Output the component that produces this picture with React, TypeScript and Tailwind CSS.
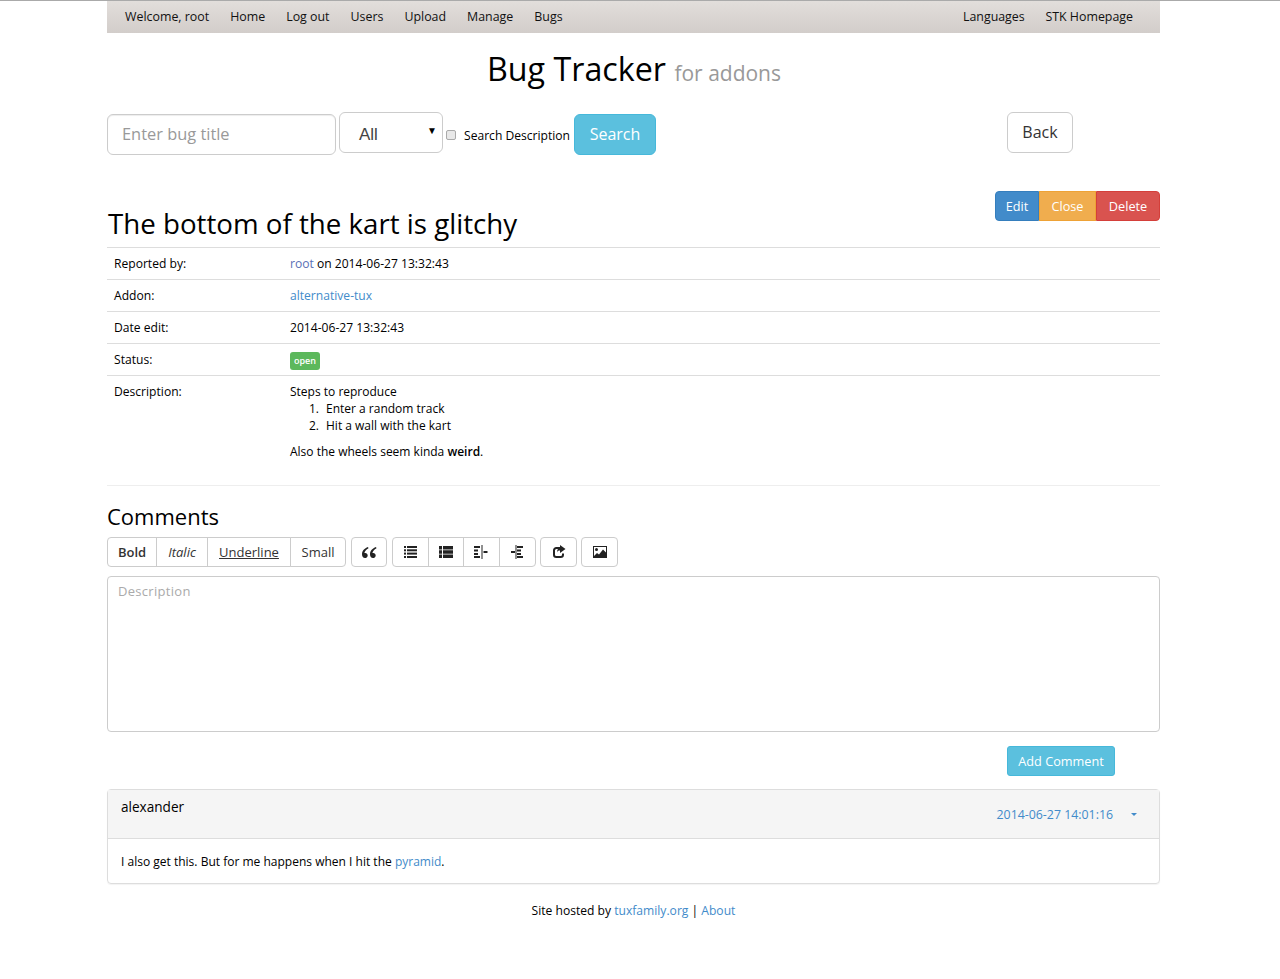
import React from 'react';

const link = 'text-[#428bca]';
const rowCls = 'flex border-t border-[#ddd] pl-[7px] pt-[7px]';

function QuoteIcon() {
	return (
		<svg width="15" height="11" viewBox="0 0 15 11" fill="#222">
			<path d="M6 0C2.500 1.200 0 3.800 0 7.200 0 9.500 1.200 11 3 11c1.500 0 2.700-1.100 2.700-2.600S4.600 6 3.300 6c-.4 0-.7 0-.9.1C2.700 4.200 4.200 2.500 6.500 1.200z" />
			<path d="M14 0c-3.500 1.200-6 3.800-6 7.200C8 9.500 9.200 11 11 11c1.500 0 2.700-1.100 2.700-2.600S12.600 6 11.300 6c-.4 0-.7 0-.9.1.3-1.900 1.800-3.600 4.100-4.900z" />
		</svg>
	);
}

function ListIcon() {
	return (
		<svg width="13" height="12" viewBox="0 0 13 12" fill="#222">
			<rect x="0" y="0" width="2" height="2" />
			<rect x="3" y="0" width="10" height="2" />
			<rect x="0" y="3.300" width="2" height="2" />
			<rect x="3" y="3.300" width="10" height="2" />
			<rect x="0" y="6.600" width="2" height="2" />
			<rect x="3" y="6.600" width="10" height="2" />
			<rect x="0" y="10" width="2" height="2" />
			<rect x="3" y="10" width="10" height="2" />
		</svg>
	);
}

function ThListIcon() {
	return (
		<svg width="14" height="12" viewBox="0 0 14 12" fill="#222">
			<rect x="0" y="0" width="3" height="3.500" />
			<rect x="4" y="0" width="10" height="3.500" />
			<rect x="0" y="4.250" width="3" height="3.500" />
			<rect x="4" y="4.250" width="10" height="3.500" />
			<rect x="0" y="8.500" width="3" height="3.500" />
			<rect x="4" y="8.500" width="10" height="3.500" />
		</svg>
	);
}

function IndentIcon({ right }: { right?: boolean }) {
	return (
		<svg width="15" height="14" viewBox="0 0 15 14" fill="#222">
			<rect x={right ? 7 : 0} y="1" width="6" height="2" />
			<rect x={right ? 7 : 0} y="4.500" width="4" height="2" />
			<rect x={right ? 7 : 0} y="8" width="4" height="2" />
			<rect x={right ? 7 : 0} y="11" width="6" height="2" />
			<rect x={right ? 5.500 : 7.500} y="0" width="1" height="14" />
			<rect x={right ? 1 : 9.500} y="6" width="4" height="2" />
		</svg>
	);
}

function ShareIcon() {
	return (
		<svg width="14" height="14" viewBox="0 0 14 14" fill="none">
			<path d="M11 8.500v1.200A2.300 2.300 0 0 1 8.700 12H4.300A2.300 2.300 0 0 1 2 9.700V5.300A2.300 2.300 0 0 1 4.300 3H8" stroke="#222" strokeWidth="2" />
			<path d="M8 0l5.500 4L8 8V5.500c-1.600 0-2.600.6-3 2 0-2.800 1-4.300 3-4.500z" fill="#222" />
		</svg>
	);
}

function PictureIcon() {
	return (
		<svg width="14" height="12" viewBox="0 0 14 12">
			<rect x="0" y="0" width="14" height="12" fill="#222" />
			<rect x="1" y="1" width="12" height="10" fill="#fff" />
			<circle cx="3.500" cy="3.500" r="1.500" fill="#222" />
			<path d="M1 10l3-3 2 1.500L10 3.500l3 3V11H1z" fill="#222" />
		</svg>
	);
}

function ToolBtn({ children, className }: { children: React.ReactNode; className?: string }) {
	return (
		<button className={`h-[30px] border border-[#ccc] bg-white flex items-center justify-center text-[#333] ${className}`}>
			{children}
		</button>
	);
}

function Row({ label, children }: { label: string; children: React.ReactNode }) {
	return (
		<div className={`${rowCls} h-[32px]`}>
			<div className="w-[176px] shrink-0">{label}</div>
			<div>{children}</div>
		</div>
	);
}

export default function App() {
	return (
		<div className="h-[979px] bg-white border-t border-t-[#aaa] font-['Open_Sans',sans-serif] text-[12.100px] leading-[17px] text-black">
			<div className="ml-[107px] w-[1053px]">
				<div className="h-[32px] pb-[2px] px-[18px] flex justify-between items-center bg-gradient-to-b from-[#e2dedb] to-[#d2cdca] text-[12.400px] text-[#111]">
					<div className="flex gap-[21px]">
						<span>Welcome, root</span>
						<span>Home</span>
						<span>Log out</span>
						<span>Users</span>
						<span>Upload</span>
						<span>Manage</span>
						<span>Bugs</span>
					</div>
					<div className="flex gap-[20.700px] pr-[9px]">
						<span>Languages</span>
						<span>STK Homepage</span>
					</div>
				</div>

				<h1 className="text-center h-[79px] pt-[14px] text-[32.250px] leading-[44px] pl-[1px]">
					Bug Tracker <small className="text-[21px] text-[#999]">for addons</small>
				</h1>

				<div className="flex h-[79px] items-start">
					<input
						placeholder="Enter bug title"
						className="mt-[2px] w-[229px] h-[41px] px-[14px] pb-[3px] border border-[#ccc] rounded-[6px] text-[16.400px] placeholder:text-[#999] shadow-[inset_0_1px_1px_rgba(0,0,0,0.075)]"
					/>
					<div className="relative ml-[3px] w-[104px] h-[41px] border border-[#ccc] rounded-[6px] pl-[19px] pt-[3px] flex items-center text-[17px] font-medium text-[#444] font-['Liberation_Sans',sans-serif]">
						All
						<span className="absolute right-[5px] top-[13px] text-[10px] leading-[10px] text-black">▼</span>
					</div>
					<input type="checkbox" className="appearance-none ml-[3px] mt-[18px] w-[10px] h-[10px] border border-[#aaa] bg-[#e8e8e8] rounded-[2px]" />
					<span className="ml-[8px] mt-[15px] w-[110px] whitespace-nowrap">Search Description</span>
					<button className="mt-[2px] w-[82px] h-[41px] rounded-[6px] border border-[#46b8da] bg-[#5bc0de] text-white text-[16px]">Search</button>
					<button className="ml-[351px] w-[66px] h-[41px] rounded-[6px] border border-[#ccc] bg-white text-[#333] text-[16px]">Back</button>
				</div>

				<div className="flex justify-end h-[30px] text-[12.700px] text-white">
					<button className="w-[44px] rounded-l-[4px] bg-[#428bca] border border-[#357ebd]">Edit</button>
					<button className="w-[57px] bg-[#f0ad4e] border border-[#eea236]">Close</button>
					<button className="w-[64px] rounded-r-[4px] bg-[#d9534f] border border-[#d43f3a]">Delete</button>
				</div>

				<h2 className="h-[26px] text-[27.700px] leading-[36px] pl-[1px] -mt-[16px] mb-[16px] relative">The bottom of the kart is glitchy</h2>

				<div>
					<Row label="Reported by:">
						<span className="text-[#5a6fb5]">root</span> on 2014-06-27 13:32:43
					</Row>
					<Row label="Addon:">
						<span className={link}>alternative-tux</span>
					</Row>
					<Row label="Date edit:">2014-06-27 13:32:43</Row>
					<Row label="Status:">
						<span className="inline-flex items-center justify-center w-[30px] h-[18px] mt-[1px] pb-[1px] rounded-[3px] bg-[#5cb85c] text-white text-[9px] font-semibold">open</span>
					</Row>
					<div className={`${rowCls} h-[110px]`}>
						<div className="w-[176px] shrink-0">Description:</div>
						<div className="text-[12px]">
							<p>Steps to reproduce</p>
							<ol className="pl-[19px]">
								<li className="flex"><span className="w-[17px]">1.</span>Enter a random track</li>
								<li className="flex"><span className="w-[17px]">2.</span>Hit a wall with the kart</li>
							</ol>
							<p className="mt-[9px]">
								Also the wheels seem kinda <b className="font-semibold">weird</b>.
							</p>
						</div>
					</div>
				</div>

				<div className="border-t border-[#eee] pt-[15px]">
					<h3 className="text-[22px] leading-[30px] h-[36px]">Comments</h3>
				</div>

				<div className="flex text-[13px]">
					<ToolBtn className="w-[50px] rounded-l-[4px] font-semibold">Bold</ToolBtn>
					<ToolBtn className="w-[52px] -ml-px italic">Italic</ToolBtn>
					<ToolBtn className="w-[84px] -ml-px underline">Underline</ToolBtn>
					<ToolBtn className="w-[56px] -ml-px rounded-r-[4px]">Small</ToolBtn>
					<ToolBtn className="w-[36px] ml-[5px] rounded-[4px]"><QuoteIcon /></ToolBtn>
					<ToolBtn className="w-[37px] ml-[5px] rounded-l-[4px]"><ListIcon /></ToolBtn>
					<ToolBtn className="w-[36px] -ml-px"><ThListIcon /></ToolBtn>
					<ToolBtn className="w-[37px] -ml-px"><IndentIcon /></ToolBtn>
					<ToolBtn className="w-[37px] -ml-px rounded-r-[4px]"><IndentIcon right /></ToolBtn>
					<ToolBtn className="w-[37px] ml-[4px] rounded-[4px]"><ShareIcon /></ToolBtn>
					<ToolBtn className="w-[37px] ml-[4px] rounded-[4px]"><PictureIcon /></ToolBtn>
				</div>

				<textarea
					placeholder="Description"
					className="block mt-[9px] w-full h-[156px] px-[10px] py-[6px] border border-[#ccc] rounded-[4px] text-[13px] tracking-[0.3px] resize-none placeholder:text-[#aaa]"
				/>

				<div className="mt-[14px] h-[43px] pl-[900px]">
					<button className="w-[108px] h-[30px] rounded-[3px] border border-[#46b8da] bg-[#5bc0de] text-white text-[12.700px]">Add Comment</button>
				</div>

				<div className="border border-[#ddd] rounded-[4px] shadow-[0_1px_1px_rgba(0,0,0,0.05)]">
					<div className="h-[49px] bg-[#f5f5f5] border-b border-[#ddd] flex justify-between px-[13px]">
						<span className="text-[13.600px] leading-[19px] mt-[7px]">alexander</span>
						<span className={`${link} text-[12.350px] mt-[15px] pr-[9px] flex h-[19px] items-center`}>
							2014-06-27 14:01:16
							<span className="ml-[18px] w-0 h-0 border-x-[3.500px] border-x-transparent border-t-[3.500px] border-t-[#428bca]" />
						</span>
					</div>
					<div className="h-[44px] px-[13px] pt-[14px] text-[12.020px]">
						I also get this. But for me happens when I hit the <span className={link}>pyramid</span>.
					</div>
				</div>

				<div className="mt-[18px] text-center">
					Site hosted by <span className={link}>tuxfamily.org</span> | <span className={link}>About</span>
				</div>
			</div>
		</div>
	);
}
